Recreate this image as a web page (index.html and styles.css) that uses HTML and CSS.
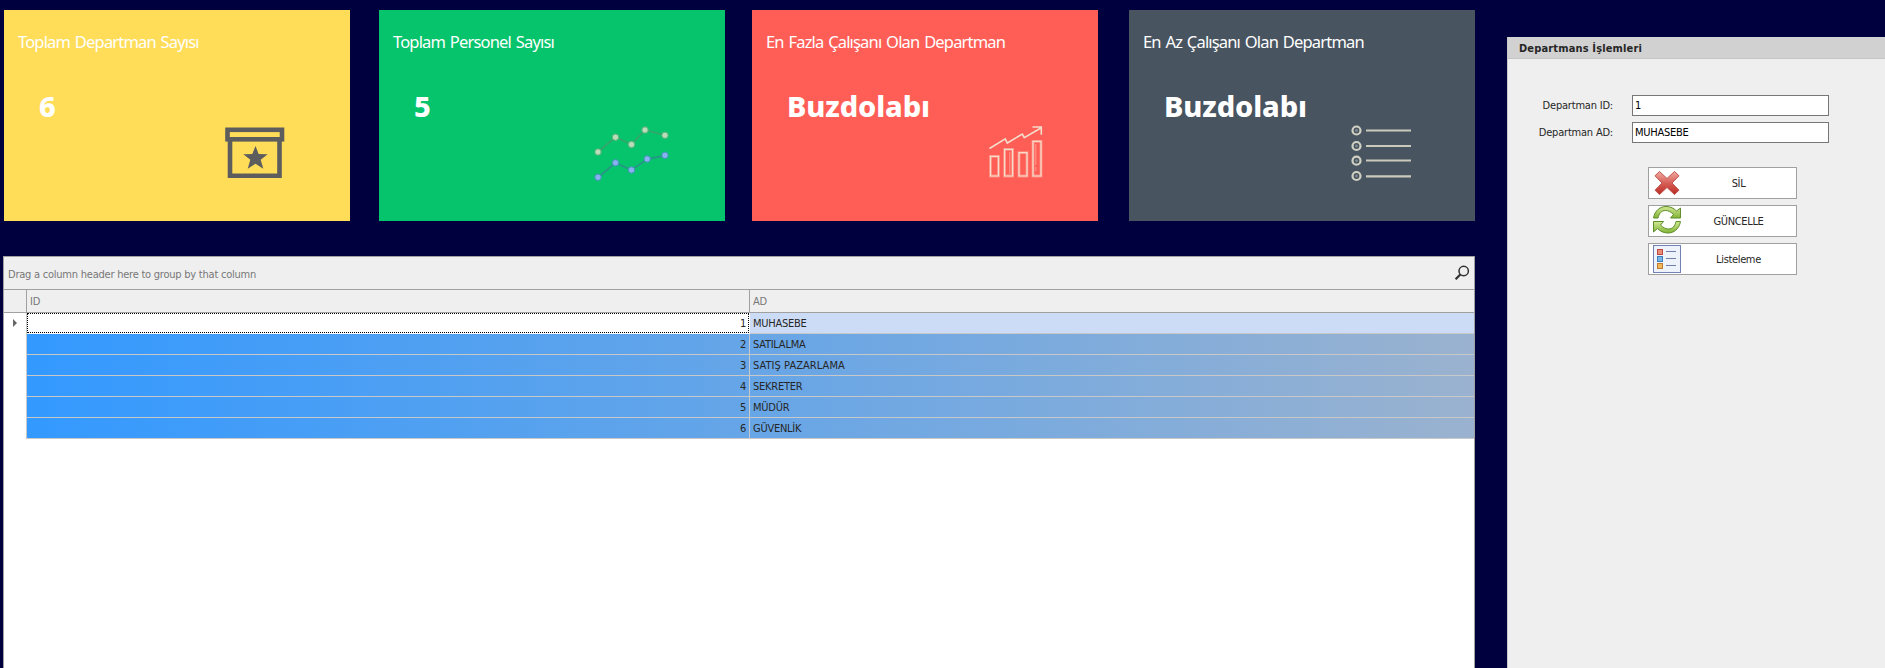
FILE: index.html
```html
<!DOCTYPE html>
<html lang="tr">
<head>
<meta charset="utf-8">
<title>Departmanlar</title>
<link rel="stylesheet" href="styles.css">
</head>
<body>
<main class="main">
  <section class="cards">
    <article class="card yellow">
      <h2 class="title">Toplam Departman Sayısı</h2>
      <p class="value">6</p>
      <svg class="icon" viewBox="0 0 346 211">
        <g fill="none" stroke="#5d5d5d" stroke-width="4.600"><rect x="223.500" y="119.800" width="54.500" height="9.500"/><path d="M226 130v35.700h49.500V130"/></g>
        <path fill="#5d5d5d" d="M251.500 136l3.200 8 9 .3-7 5.400 2.600 9-7.800-5-7.800 5 2.600-9-7-5.400 9-.3z"/>
      </svg>
    </article>
    <article class="card green">
      <h2 class="title">Toplam Personel Sayısı</h2>
      <p class="value">5</p>
      <svg class="icon" viewBox="0 0 346 211">
        <path d="M219 142l17.500-15 16 7.500L266 120l20 5.200" fill="none" stroke="#32a66c" stroke-width="1.800"/>
        <g fill="#b9dcb9" stroke="#58b277"><circle cx="219" cy="142" r="3.200"/><circle cx="236.500" cy="127.200" r="3.200"/><circle cx="252.500" cy="134.500" r="3.200"/><circle cx="266" cy="120" r="3.200"/><circle cx="286" cy="125.300" r="3.200"/></g>
        <path d="M219 167.500l17.500-14.700 16 7.200 16-11 17.500-3.500" fill="none" stroke="#289687" stroke-width="1.800"/>
        <g fill="#87b1f0" stroke="#4095b7"><circle cx="219" cy="167.300" r="3.200"/><circle cx="236.500" cy="152.800" r="3.200"/><circle cx="252.500" cy="160" r="3.200"/><circle cx="268.200" cy="149" r="3.200"/><circle cx="286" cy="145.300" r="3.200"/></g>
      </svg>
    </article>
    <article class="card red">
      <h2 class="title">En Fazla Çalışanı Olan Departman</h2>
      <p class="value">Buzdolabı</p>
      <svg class="icon" viewBox="0 0 346 211">
        <g fill="none" stroke="#ff8f80" stroke-width="2.800"><path d="M238.500 146.300h8v19.700h-8zM252.600 139.300h8V166h-8zM267 142.600h8V166h-8zM281 131.300h8V166h-8z"/></g>
        <g fill="none" stroke="#f5dccb" stroke-width="1.200"><path d="M238.500 146.300h8v19.700h-8zM252.600 139.300h8V166h-8zM267 142.600h8V166h-8zM281 131.300h8V166h-8z"/><path stroke-width="1.600" d="M237.500 138.500l15.800-9.700 2 4.200 15-9 2 3.700 17-10M280.500 117h8.800v7.800"/></g>
        <path d="M257.800 142v22M283.800 134v21M283.800 157v4" stroke="#ff998a" fill="none"/>
      </svg>
    </article>
    <article class="card slate">
      <h2 class="title">En Az Çalışanı Olan Departman</h2>
      <p class="value">Buzdolabı</p>
      <svg class="icon" viewBox="0 0 346 211">
        <g fill="#485460" stroke="#d1d1c3" stroke-width="2.200"><circle cx="227.500" cy="120.500" r="4"/><circle cx="227.500" cy="136" r="4"/><circle cx="227.500" cy="150.700" r="4"/><circle cx="227.500" cy="166" r="4"/></g>
        <g fill="#828b8c"><circle cx="227.500" cy="120.500" r="1.400"/><circle cx="227.500" cy="136" r="1.400"/><circle cx="227.500" cy="150.700" r="1.400"/><circle cx="227.500" cy="166" r="1.400"/></g>
        <path d="M237 120.500h45M237 136h45M237 150.500h45M237 166.300h45" stroke="#c9cabd" stroke-width="2.200"/>
      </svg>
    </article>
  </section>

  <section class="grid">
    <div class="group">
      <span class="hint">Drag a column header here to group by that column</span>
      <svg class="search" width="16" height="16" viewBox="0 0 16 16"><circle cx="9.700" cy="6" r="4.700" fill="none" stroke="#303030" stroke-width="1.500"/><path d="M6.300 9.500L1.600 14.200" stroke="#303030" stroke-width="2.200"/></svg>
    </div>
    <div class="row head"><span class="ind"></span><span class="cell">ID</span><span class="cell ad">AD</span></div>
    <div class="row current"><span class="ind"><svg width="4" height="8" viewBox="0 0 4 8"><path d="M0 0l4 4-4 4z" fill="#666"/></svg></span><span class="cell num">1</span><span class="cell ad">MUHASEBE</span></div>
    <div class="row"><span class="ind"></span><div class="fill"><span class="cell num">2</span><span class="cell ad">SATILALMA</span></div></div>
    <div class="row"><span class="ind"></span><div class="fill"><span class="cell num">3</span><span class="cell ad wide">SATIŞ PAZARLAMA</span></div></div>
    <div class="row"><span class="ind"></span><div class="fill"><span class="cell num">4</span><span class="cell ad">SEKRETER</span></div></div>
    <div class="row"><span class="ind"></span><div class="fill"><span class="cell num">5</span><span class="cell ad">MÜDÜR</span></div></div>
    <div class="row"><span class="ind"></span><div class="fill"><span class="cell num">6</span><span class="cell ad">GÜVENLİK</span></div></div>
  </section>
</main>

<aside class="panel">
  <h1 class="panel-title">Departmans İşlemleri</h1>
  <div class="field"><label for="did">Departman ID:</label><input id="did" value="1"></div>
  <div class="field"><label for="dad">Departman AD:</label><input id="dad" value="MUHASEBE"></div>
  <div class="buttons">
    <button class="btn"><svg width="32" height="30" viewBox="0 0 32 30">
      <defs><linearGradient id="r" x1="0" y1="0" x2="0" y2="1"><stop offset="0" stop-color="#f1aaa2"/><stop offset=".5" stop-color="#d75f57"/><stop offset="1" stop-color="#ba2c26"/></linearGradient></defs>
      <path d="M10.500 3.500L18 10.500l7.500-7 4.500 4.300-7 7.200 7 7.200-4.500 4.300-7.500-7-7.500 7L6 22.200 13 15 6 7.800z" fill="url(#r)" stroke="#bf544d" stroke-linejoin="round"/>
    </svg><span>SİL</span></button>
    <button class="btn"><svg width="32" height="30" viewBox="0 0 32 30">
      <defs><linearGradient id="g" x1="0" y1="0" x2="0" y2="1"><stop offset="0" stop-color="#d2e795"/><stop offset="1" stop-color="#80b434"/></linearGradient></defs>
      <path d="M4.500 12C6 4 11.500.5 17 .5c4.500 0 8 1.800 10.500 4.500l4-3v10h-10l3-3.500C22 6 19.500 4.500 16.500 4.500 12.500 4.500 10 7.500 9 12z" fill="url(#g)" stroke="#5f8e2b" stroke-linejoin="round"/>
      <path d="M31.500 15.500C30 23.500 24.500 27 19 27c-4.500 0-8-1.800-10.500-4.500l-4 3.500V15.500h10l-3 3.500c2.500 2.500 5 4 8 4 4 0 6.500-3 7.500-7.500z" fill="url(#g)" stroke="#5f8e2b" stroke-linejoin="round"/>
    </svg><span>GÜNCELLE</span></button>
    <button class="btn"><svg width="32" height="30" viewBox="0 0 32 30">
      <rect x="4.500" y="1.500" width="27" height="27" fill="#edf2fb" stroke="#7382b4"/>
      <rect x="8.500" y="5.500" width="5" height="5" fill="#e98b77" stroke="#b94a46"/><rect x="8.500" y="12.500" width="5" height="5" fill="#77b5e7" stroke="#3f7fbd"/><rect x="8.500" y="19.500" width="5" height="5" fill="#f4b757" stroke="#bd7b36"/>
      <path d="M17 7.500h10M17 14.500h10M17 21.500h10" stroke="#7080ae"/>
    </svg><span>Listeleme</span></button>
  </div>
</aside>
</body>
</html>
```
FILE: styles.css
```css
* { box-sizing: border-box; }
body {
  margin: 0;
  height: 668px;
  overflow: hidden;
  display: flex;
  background: #00003f;
  color: #262626;
  font: 11px/20px "DejaVu Sans Condensed", "DejaVu Sans", sans-serif;
  font-stretch: condensed;
  letter-spacing: -0.25px;
}
h1, h2, p { margin: 0; }
.main { width: 1507px; padding: 10px 0 0 3px; display: flex; flex-direction: column; gap: 35px; }
.cards { display: grid; grid-template-columns: 375px 373px 377px 346px; padding-left: 1px; }
.card { position: relative; width: 346px; height: 211px; padding: 20px 0 0 14px; color: #fff; }
.yellow { background: #ffdd59; }
.green { background: #05c46b; }
.red { background: #ff5e57; }
.slate { background: #485460; }
.title { font: 16.5px/24px "Noto Sans", sans-serif; letter-spacing: -0.83px; word-spacing: 1.3px; white-space: nowrap; }
.value { margin: 34px 0 0 21px; font: 800 29px/36px "Noto Sans", sans-serif; letter-spacing: -0.1px; }
.icon { position: absolute; inset: 0; }

.grid { width: 1472px; height: 430px; flex: none; background: #fff; border: 1px solid #a0a0a0; }
.group { height: 33px; background: #efefef; border-bottom: 1px solid #a0a0a0; display: flex; justify-content: space-between; align-items: center; padding: 3px 4px 0 4px; color: #777; }
.hint { letter-spacing: -0.23px; }
.search { margin-top: -3px; }
.row { height: 21px; display: flex; }
.ind { width: 23px; flex: none; border-right: 1px solid #c8c8c8; display: flex; align-items: center; padding-left: 9px; }
.row.current .ind { padding-bottom: 2px; }
.cell { width: 723px; height: 20px; padding: 1px 3px 0; border-right: 1px solid #c8c8c8; white-space: nowrap; }
.ad { width: 724px; border-right: 0; }
.wide { letter-spacing: 0.05px; }
.num { text-align: right; }
.head { height: 23px; background: #efefef; border-bottom: 1px solid #a0a0a0; color: #777; }
.head .ind, .head .cell { height: 22px; border-color: #a0a0a0; }
.head .cell { line-height: 21px; }
.head .ad { border-right: 0; }
.fill { width: 1447px; display: flex; border-bottom: 1px solid #c8c8c8; background: linear-gradient(90deg, #3399ff, #9ab2cf); }
.current .cell { height: 21px; border-bottom: 1px solid #c8c8c8; }
.current .num { height: 20px; width: 722px; margin-right: 1px; padding: 0 2px 0 0; border: 1px dotted #000; }
.current .ad { background: #cddcf6; }

.panel { width: 378px; height: 631px; margin-top: 37px; background: #efefef; border-left: 1px solid #c8c8c8; }
.panel-title { height: 22px; margin-bottom: 36px; padding: 1px 0 0 11px; background: #d1d1d1; border-bottom: 1px solid #c5c5c5; font: bold 11px/21px "DejaVu Sans Condensed", "DejaVu Sans", sans-serif; font-stretch: condensed; letter-spacing: 0.15px; }
.field { display: flex; height: 21px; margin-bottom: 6px; align-items: center; }
.field label { width: 105px; margin-right: 19px; text-align: right; letter-spacing: -0.2px; white-space: nowrap; }
.field input { width: 197px; height: 21px; padding: 0 2px; border: 1px solid #777; background: #fff; color: #000; font: inherit; font-stretch: condensed; letter-spacing: inherit; outline: 0; }
.buttons { display: flex; flex-direction: column; gap: 6px; padding: 18px 0 0 140px; }
.btn { width: 149px; height: 32px; padding: 0; border: 1px solid #a0a0a0; background: #fff; display: flex; color: inherit; font: inherit; font-stretch: condensed; line-height: 30px; letter-spacing: -0.35px; }
.btn svg { flex: none; }
.btn span { flex: 1; padding-top: 1px; text-align: center; }
```
